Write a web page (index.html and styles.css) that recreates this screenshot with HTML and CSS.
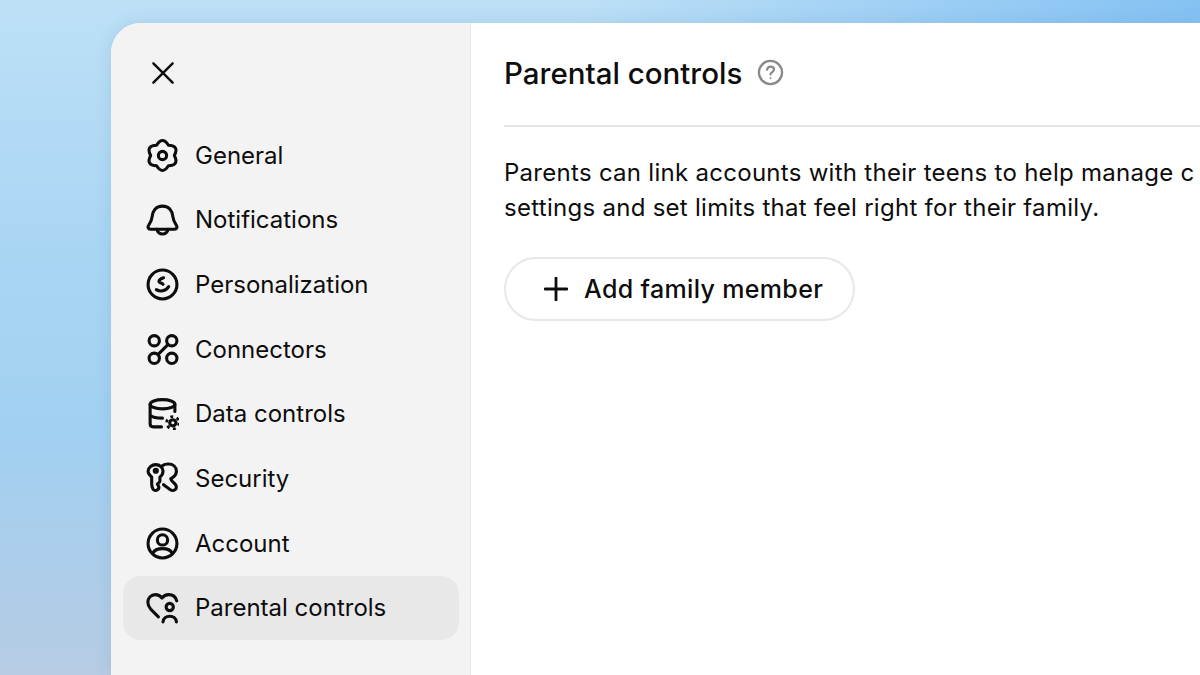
FILE: index.html
```html
<!DOCTYPE html>
<html lang="en">
<head>
  <meta charset="UTF-8" />
  <meta name="viewport" content="width=device-width, initial-scale=1.0"/>
  <title>Settings | Parental controls</title>
  <link rel="stylesheet" href="styles.css">
</head>
<body>
  <div class="window">
    <aside class="sidebar">
      <button class="close-button" aria-label="Close">
        <svg class="icon" viewBox="0 0 32 32"><path d="M5 5 27 27M27 5 5 27"/></svg>
      </button>
      <nav class="nav">
        <a class="nav-item">
          <svg class="icon" viewBox="0 0 32 32">
            <path d="M10.250 6.040Q16-3 21.750 6.040 32.450 6.500 27.500 16 32.450 25.500 21.750 25.960 16 35 10.250 25.960-.45 25.500 4.500 16-.45 6.500 10.250 6.040Z"/>
            <circle cx="16" cy="16" r="4"/>
          </svg>
          <span>General</span>
        </a>
        <a class="nav-item">
          <svg class="icon" viewBox="0 0 32 32">
            <path d="M16 3C9.500 3 6.500 8 6 13c-.4 3.500-1.500 6-3.200 8.200-1.500 2-.8 4.300 1.700 4.300h23c2.500 0 3.200-2.300 1.700-4.300C27.500 19 26.400 16.500 26 13 25.500 8 22.500 3 16 3Z"/>
            <path d="M10.500 25.500c.8 3 2.700 4.500 5.500 4.500s4.700-1.500 5.500-4.500"/>
          </svg>
          <span>Notifications</span>
        </a>
        <a class="nav-item">
          <svg class="icon" viewBox="0 0 32 32">
            <circle cx="16" cy="16" r="14"/>
            <path d="M17 9.500c-2.500.8-4.500 2.200-4.500 3.700 0 1.500 3.500 1.300 4 2.600"/>
            <path d="M10 21c3.500 2.300 9 1.800 12-3"/>
          </svg>
          <span>Personalization</span>
        </a>
        <a class="nav-item">
          <svg class="icon" viewBox="0 0 32 32">
            <circle cx="8" cy="7.500" r="5"/>
            <circle cx="25" cy="7.500" r="5"/>
            <circle cx="8" cy="24.500" r="5"/>
            <circle cx="25" cy="24.500" r="5"/>
            <path d="M21.500 11 11.500 21"/>
          </svg>
          <span>Connectors</span>
        </a>
        <a class="nav-item">
          <svg class="icon" viewBox="0 0 32 32">
            <ellipse cx="16" cy="7" rx="12" ry="4.500"/>
            <path d="M4 7V26c0 2 1.300 3 3 3h8M28 7V14M4 17.500c2 2 6.500 3 12 3"/>
            <circle cx="26" cy="25" r="3" class="gear-hub"/>
            <circle cx="26" cy="25" r="6" class="gear-teeth"/>
          </svg>
          <span>Data controls</span>
        </a>
        <a class="nav-item">
          <svg class="icon" viewBox="0 0 32 32">
            <path d="M9.500 2.500c4 0 7 3 7 6.500 0 2.500-1.500 4.500-3 5.500v4c0 1-.8 1.500-1.500 2l-1 1 1 1.500c.8 1.300.4 3-.8 4-1.300 1-3.400.8-4.400-.7-1-1.600-1.300-3.300-1.300-5V14.500C3.500 13 2 11 2 9c0-3.500 3.500-6.500 7.500-6.500Z"/>
            <circle cx="9.500" cy="8.500" r="1.500"/>
            <path d="M16 3.500c1.500-1 3.500-1.500 5.500-1.500 5 0 8 3 8 7 0 2.500-1.300 4.500-3.200 5.700l-2.300 1.500 1 2 3.200 3.300c1.500 1.500 1.600 3.800.4 5-1.300 1.500-3.600 1.500-5 .3L17 22"/>
          </svg>
          <span>Security</span>
        </a>
        <a class="nav-item">
          <svg class="icon" viewBox="0 0 32 32">
            <circle cx="16" cy="16" r="14"/>
            <circle cx="16" cy="12.500" r="5"/>
            <path d="M6.500 25.500c1.500-3 5-4.500 9.500-4.500s8 1.500 9.500 4.500"/>
          </svg>
          <span>Account</span>
        </a>
        <a class="nav-item active">
          <svg class="icon" viewBox="0 0 32 32">
            <path d="M12 25 4.500 17.500C2.500 15.400 1.800 13.500 1.800 11 1.800 6.500 5 3.500 9 3.500c2.800 0 5 1.300 6.500 3.300C17 4.800 19.200 3.500 22 3.500c3.800 0 6.800 2.300 7.800 6"/>
            <circle cx="23" cy="15.500" r="3.500"/>
            <path d="M16.500 30c.3-3.500 3-5.500 6.500-5.500s6.200 2 6.500 5.500"/>
          </svg>
          <span>Parental controls</span>
        </a>
      </nav>
    </aside>

    <main class="content">
      <div class="content-header">
        <h1>Parental controls</h1>
        <svg class="help-icon" viewBox="0 0 28 28">
          <circle cx="14" cy="14" r="12"/>
          <path d="M10.500 11c.3-1.900 1.700-3 3.600-3 2 0 3.500 1.200 3.500 3 0 2.500-3.600 2.600-3.600 5"/>
          <circle class="help-dot" cx="14" cy="20" r="1"/>
        </svg>
      </div>
      <p class="description">Parents can link accounts with their teens to help manage c<br>settings and set limits that feel right for their family.</p>
      <button class="add-button">
        <svg class="plus" viewBox="0 0 24 24"><path d="M12 1V23M1 12H23"/></svg>
        Add family member
      </button>
    </main>
  </div>
</body>
</html>
```

FILE: styles.css
```css
* {
  box-sizing: border-box;
  margin: 0;
  padding: 0;
  font-family: Inter, 'Liberation Sans', sans-serif;
}
html, body {
  height: 100%;
  overflow: hidden;
}
body {
  background:
    radial-gradient(circle at 1200px 0, #84c1f3 0, rgba(132, 193, 243, 0) 620px),
    linear-gradient(to bottom, #bde0f6 0%, #aad6f4 35%, #a2d0f2 65%, #b6cce3 100%);
  color: #0d0d0d;
  padding: 23px 0 0 111px;
}
.window {
  display: flex;
  height: 100%;
  background: #fff;
  border-radius: 30px 0 0 0;
  box-shadow: 0 0 16px rgba(70, 120, 180, 0.18);
  overflow: hidden;
}
.sidebar {
  width: 360px;
  flex-shrink: 0;
  background: #f3f3f3;
  border-right: 1px solid #e8e8e8;
  padding: 0 11px 0 12px;
}
.close-button {
  display: block;
  background: none;
  border: none;
  width: 28px;
  height: 28px;
  margin: 36px 0 36px 26px;
}
.close-button .icon {
  width: 28px;
  height: 28px;
  stroke-width: 2.800;
}
.icon {
  width: 33px;
  height: 33px;
  flex-shrink: 0;
  fill: none;
  stroke: #0d0d0d;
  stroke-width: 3;
  stroke-linecap: round;
  stroke-linejoin: round;
}
.nav {
  display: flex;
  flex-direction: column;
  gap: 0.7px;
}
.nav-item {
  display: flex;
  align-items: center;
  gap: 16px;
  height: 64px;
  padding-left: 23px;
  border-radius: 18px;
  font-size: 24px;
}
.nav-item.active {
  background: #e8e8e8;
}
.gear-teeth {
  stroke-dasharray: 2.800 3.480;
  stroke-width: 2.600;
  stroke-linecap: butt;
}
.gear-hub {
  stroke-width: 3;
}
.content {
  flex: 1;
  min-width: 0;
  padding: 0 0 0 33px;
  white-space: nowrap;
}
.content-header {
  display: flex;
  align-items: center;
  gap: 15px;
  height: 104px;
  border-bottom: 2px solid #e6e6e6;
  margin-bottom: 29px;
  padding-bottom: 3px;
}
.content-header h1 {
  font-size: 29.500px;
  font-weight: 500;
}
.help-icon {
  width: 27px;
  height: 27px;
  fill: none;
  stroke: #8a8a8a;
  stroke-width: 2.400;
  stroke-linecap: round;
}
.help-icon .help-dot {
  fill: #8a8a8a;
  stroke: none;
}
.description {
  font-size: 24px;
  letter-spacing: 0.28px;
  line-height: 34.500px;
  margin-bottom: 32px;
}
.add-button {
  display: flex;
  align-items: center;
  gap: 16px;
  width: 351px;
  height: 64px;
  padding-left: 38px;
  background: #fff;
  border: 2px solid #e8e8e8;
  border-radius: 32px;
  font-size: 25px;
  letter-spacing: 0.35px;
  font-weight: 500;
  color: #0d0d0d;
}
.plus {
  width: 24px;
  height: 24px;
  fill: none;
  stroke: #0d0d0d;
  stroke-width: 2.800;
  stroke-linecap: round;
}
```
